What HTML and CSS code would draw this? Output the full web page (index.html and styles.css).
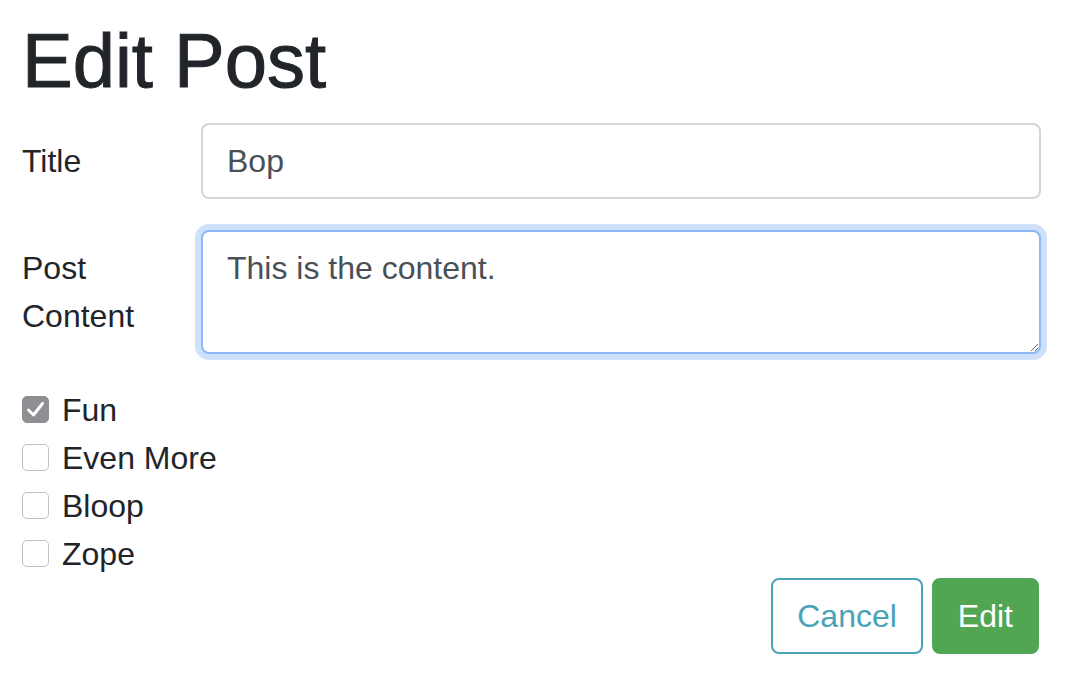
FILE: index.html
```html
<!DOCTYPE html>
<html lang="en">
<head>
<meta charset="utf-8">
<title>Edit Post</title>
<link rel="stylesheet" href="styles.css">
</head>
<body>
<div class="container">
  <h1 class="page-title">Edit Post</h1>
  <form class="post-form">
    <div class="form-row">
      <label class="row-label" for="title">Title</label>
      <input class="field" id="title" type="text" value="Bop">
    </div>
    <div class="form-row form-row-last">
      <label class="row-label" for="content">Post Content</label>
      <textarea class="field field-area is-focused" id="content" rows="2">This is the content.</textarea>
    </div>
    <div class="checks">
      <label class="check-row">
        <span class="check-box is-checked">
          <svg viewBox="0 0 27 27" width="27" height="27"><path d="M6.5 14 L11.5 19 L20.5 7.5" fill="none" stroke="#fff" stroke-width="3" stroke-linecap="round" stroke-linejoin="round"/></svg>
        </span>
        <span class="check-text">Fun</span>
      </label>
      <label class="check-row">
        <span class="check-box"></span>
        <span class="check-text">Even More</span>
      </label>
      <label class="check-row">
        <span class="check-box"></span>
        <span class="check-text">Bloop</span>
      </label>
      <label class="check-row">
        <span class="check-box"></span>
        <span class="check-text">Zope</span>
      </label>
    </div>
    <div class="actions">
      <button type="button" class="btn btn-outline">Cancel</button>
      <button type="button" class="btn btn-success">Edit</button>
    </div>
  </form>
</div>
</body>
</html>
```
FILE: styles.css
```css
* { box-sizing: border-box; }

html, body {
  margin: 0;
  padding: 0;
  background: #fff;
}

body {
  font-family: "Liberation Sans", Arial, sans-serif;
  font-size: 32px;
  line-height: 48px;
  color: #212529;
}

.container {
  padding: 0 31px 0 22px;
}

.page-title {
  margin: 14px 0 15px 0;
  font-size: 76px;
  line-height: 94px;
  font-weight: 400;
  -webkit-text-stroke: 1px #212529;
  color: #212529;
}

.form-row {
  display: grid;
  grid-template-columns: 149px 1fr;
  column-gap: 30px;
  margin-bottom: 31px;
}

.form-row-last {
  margin-bottom: 32px;
}

.row-label {
  padding-top: 14px;
  line-height: 48px;
}

.field {
  display: block;
  width: 100%;
  margin: 0;
  font-family: inherit;
  font-size: 32px;
  line-height: 48px;
  color: #495057;
  background: #fff;
  border: 2px solid #d2d6da;
  border-radius: 8px;
  padding: 12px 24px;
  outline: none;
}

.field-area {
  height: 124px;
  resize: vertical;
}

.is-focused {
  border-color: #8cb8f5;
  box-shadow: 0 0 0 6px #cfe0fb;
}

.checks {
  display: flex;
  flex-direction: column;
}

.check-row {
  display: flex;
  align-items: flex-start;
  gap: 13px;
  height: 48px;
  line-height: 48px;
}

.check-box {
  flex: none;
  width: 27px;
  height: 27px;
  margin-top: 10px;
  border: 1.5px solid #c0c0c0;
  border-radius: 5px;
  background: #fff;
  display: flex;
}

.check-box.is-checked {
  background: #8e8e93;
  border-color: #8e8e93;
}

.check-box svg {
  margin: -1.5px;
  display: block;
}

.actions {
  display: flex;
  justify-content: flex-end;
  gap: 9px;
  padding-right: 2px;
}

.btn {
  font-family: inherit;
  font-size: 32px;
  line-height: 48px;
  padding: 12px 24px;
  border: 2px solid transparent;
  border-radius: 8px;
  margin: 0;
  cursor: pointer;
}

.btn-outline {
  color: #4aa2b6;
  background: #fff;
  border-color: #4aa2b6;
}

.btn-success {
  color: #fff;
  background: #52a552;
  border-color: #52a552;
}
```
